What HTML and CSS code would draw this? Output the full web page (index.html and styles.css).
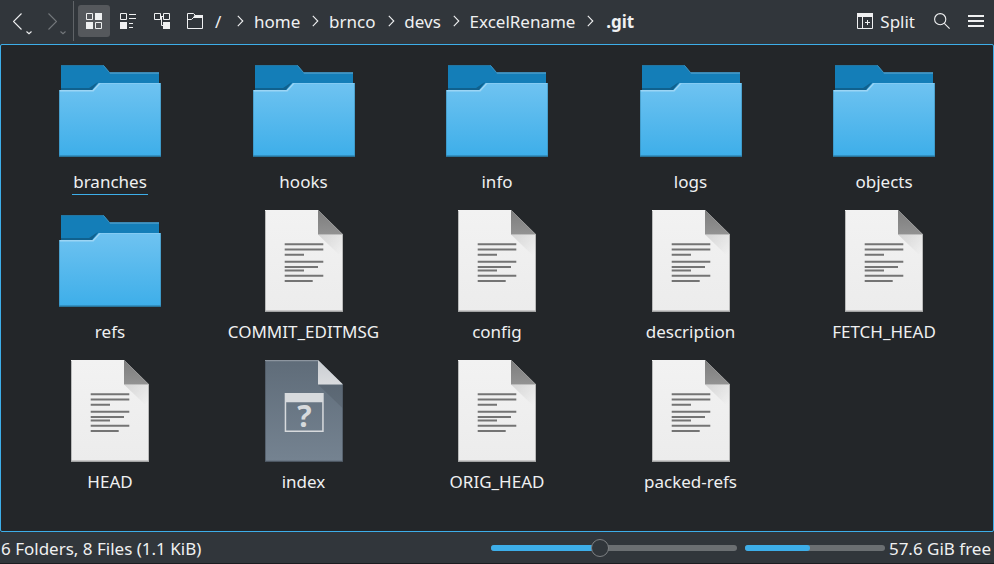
FILE: index.html
```html
<!DOCTYPE html>
<html lang="en">
<head>
<meta charset="utf-8">
<title>.git</title>
<link rel="stylesheet" href="styles.css">
</head>
<body>
<svg class="defs" width="0" height="0">
  <defs>
    <linearGradient id="front" x1="0" y1="0" x2="0" y2="1"><stop offset="0" stop-color="#6fc3f1"/><stop offset="1" stop-color="#3daee9"/></linearGradient>
    <linearGradient id="paper" x1="0" y1="0" x2="0" y2="1"><stop offset="0" stop-color="#f2f2f2"/><stop offset="1" stop-color="#ececec"/></linearGradient>
    <linearGradient id="fold" x1="0" y1="0" x2="0" y2="1"><stop offset="0" stop-color="#7d7d7d"/><stop offset="1" stop-color="#929292"/></linearGradient>
    <linearGradient id="shade" gradientUnits="userSpaceOnUse" x1="72" y1="25" x2="92" y2="45"><stop offset="0" stop-color="#000" stop-opacity=".11"/><stop offset="1" stop-color="#000" stop-opacity="0"/></linearGradient>
    <linearGradient id="slate" x1="0" y1="0" x2="0" y2="1"><stop offset="0" stop-color="#5f6c79"/><stop offset="1" stop-color="#758391"/></linearGradient>
    <linearGradient id="lightfold" x1="0" y1="0" x2="0" y2="1"><stop offset="0" stop-color="#c9cdd1"/><stop offset="1" stop-color="#dadcdf"/></linearGradient>
  </defs>
  <symbol id="folder" viewBox="0 0 112 102">
    <path fill="#147eb8" d="M7 5h42.500l6 7.500H105V30H7z"/>
    <path fill="#4a9dca" d="M55 12.200h50v1.500H56z"/>
    <path fill="#28749b" d="M7 5h42.500v.7H7z"/>
    <path fill="none" stroke="#3e93c1" d="M49.500 5.500l6 7"/>
    <path fill="#10618e" d="M7 28h28l9-6-6 8H7z"/>
    <path fill="url(#front)" d="M5 30h33.500l6.500-7h62v74H5z"/>
    <path fill="#9bd5f5" d="M5 30h33.500l6.500-7h2l-7.500 8.500H5z"/>
    <path fill="#8bcef3" d="M45 23h62v.7H45z"/>
    <path fill="#28749b" d="M5 95.500h102V97H5z"/>
    <path fill="#3585ad" opacity=".65" d="M5 30h.8v66H5zM106.200 23h.8v73h-.8z"/>
  </symbol>
  <symbol id="file" viewBox="0 0 112 102">
    <path fill="url(#paper)" d="M17 0h53l25 24.500V102H17z"/>
    <path fill="url(#shade)" d="M70 24.500h25V48.500z"/>
    <path fill="url(#fold)" d="M70 0l25 24.500H70z"/>
    <path fill="#a3a4a4" d="M17 100.600h78V102H17zM17 1h.7v100H17zM94.300 24.500h.7V101h-.7z"/>
    <path fill="#747474" d="M36.700 33.200h38.600v2H36.700zm0 5.400h38.600v2H36.700zm0 5.200H56v2H36.700zm0 7h38.600v2H36.700zm0 5.300H70v2H36.700zm0 3.500H56v2H36.700zm0 5.200h38.600v2H36.700zm0 5.300h28v2h-28z"/>
  </symbol>
  <symbol id="chevron" viewBox="0 0 7 12"><path class="line" d="M.8.8L5.800 6 .8 11.200"/></symbol>
  <symbol id="caret" viewBox="0 0 6 4"><path class="line" d="M.5.500L3 2.700 5.500.500"/></symbol>
</svg>

<div class="window">
  <header class="toolbar">
    <div class="nav back"><svg width="9" height="17" viewBox="0 0 9 17"><path class="line" d="M8.500.500l-8 8 8 8"/></svg><svg class="caret" width="6" height="4"><use href="#caret"/></svg></div>
    <div class="nav forward"><svg width="9" height="17" viewBox="0 0 9 17"><path class="line" d="M.5.500l8 8-8 8"/></svg><svg class="caret" width="6" height="4"><use href="#caret"/></svg></div>
    <div class="divider"></div>
    <div class="tool active"><svg width="16" height="16" viewBox="0 0 16 16"><path class="box" d="M.5.500h6v6h-6zM9.500 9.500h6v6h-6z"/><path class="solid" d="M9 0h7v7H9zM0 9h7v7H0z"/></svg></div>
    <div class="tool"><svg width="16" height="16" viewBox="0 0 16 16"><path class="box" d="M.5.500h6v6h-6z"/><path class="solid" d="M0 9h7v7H0zM9 1h7v1H9zM9 5h7v1H9zM9 10h4v1H9zM9 14h4v1H9z"/></svg></div>
    <div class="tool"><svg width="16" height="16" viewBox="0 0 16 16"><path class="box" d="M.5.500h6v6h-6zM9.500.500h6v6h-6zM7 3.500h2.500M7.500 3.500v9H9"/><path class="solid" d="M9 9h7v7H9z"/></svg></div>
    <div class="tool place"><svg width="16" height="16" viewBox="0 0 16 16"><path class="box" d="M.5.500h6l2 2h7v13H.5z"/><path class="box" d="M.5 6.500h4l3-3h8"/><path class="solid" d="M7.500 2H16v3H6z"/></svg></div>
    <nav class="crumbs">
      <span class="root">/</span><svg width="7" height="12"><use href="#chevron"/></svg>
      <span>home</span><svg width="7" height="12"><use href="#chevron"/></svg>
      <span>brnco</span><svg width="7" height="12"><use href="#chevron"/></svg>
      <span>devs</span><svg width="7" height="12"><use href="#chevron"/></svg>
      <span>ExcelRename</span><svg width="7" height="12"><use href="#chevron"/></svg>
      <b>.git</b>
    </nav>
    <div class="actions">
      <svg width="16" height="16" viewBox="0 0 16 16"><path class="box" d="M.5.500h15v15H.5zM5.500 3v12M10.500 7v5M8 9.500h5"/><path class="solid" d="M0 0h16v4H0z"/></svg>
      <span>Split</span>
      <svg class="search" width="16" height="16" viewBox="0 0 16 16"><circle class="line" cx="6.200" cy="6.200" r="5.600"/><path class="line" d="M10.300 10.300l5.300 5.300"/></svg>
      <svg class="menu" width="16" height="12" viewBox="0 0 16 12"><path class="solid" d="M0 0h16v2H0zM0 5h16v2H0zM0 10h16v2H0z"/></svg>
    </div>
  </header>

  <main class="view">
    <div class="item current"><svg width="112" height="102"><use href="#folder"/></svg><span>branches</span></div>
    <div class="item"><svg width="112" height="102"><use href="#folder"/></svg><span>hooks</span></div>
    <div class="item"><svg width="112" height="102"><use href="#folder"/></svg><span>info</span></div>
    <div class="item"><svg width="112" height="102"><use href="#folder"/></svg><span>logs</span></div>
    <div class="item"><svg width="112" height="102"><use href="#folder"/></svg><span>objects</span></div>
    <div class="item"><svg width="112" height="102"><use href="#folder"/></svg><span>refs</span></div>
    <div class="item"><svg width="112" height="102"><use href="#file"/></svg><span>COMMIT_EDITMSG</span></div>
    <div class="item"><svg width="112" height="102"><use href="#file"/></svg><span>config</span></div>
    <div class="item"><svg width="112" height="102"><use href="#file"/></svg><span>description</span></div>
    <div class="item"><svg width="112" height="102"><use href="#file"/></svg><span>FETCH_HEAD</span></div>
    <div class="item"><svg width="112" height="102"><use href="#file"/></svg><span>HEAD</span></div>
    <div class="item">
      <svg width="112" height="102" viewBox="0 0 112 102">
        <path fill="url(#slate)" d="M17 0h53l25 24.500V102H17z"/>
        <path fill="#8c959f" d="M17 0h53v1.300H17z"/>
        <path fill="#2b333b" opacity=".16" d="M70 24.500h25V48.500z"/>
        <path fill="url(#lightfold)" d="M70 0l25 24.500H70z"/>
        <path fill="#4c5661" d="M17 100.700h78V102H17zM17 1h.7v100H17zM94.300 24.500h.7V101h-.7z"/>
        <path fill="#d7dadd" fill-rule="evenodd" d="M36.700 33h39v39h-39zM38.200 42.300v28.200h36V42.300z"/>
        <text x="56.500" y="67" text-anchor="middle" class="mark">?</text>
      </svg>
      <span>index</span>
    </div>
    <div class="item"><svg width="112" height="102"><use href="#file"/></svg><span>ORIG_HEAD</span></div>
    <div class="item"><svg width="112" height="102"><use href="#file"/></svg><span>packed-refs</span></div>
  </main>

  <footer class="status">
    <span class="summary">6 Folders, 8 Files (1.1 KiB)</span>
    <div class="track zoom"><div class="fill"></div><div class="thumb"></div></div>
    <div class="track space"><div class="fill"></div></div>
    <span class="free">57.6 GiB free</span>
  </footer>
</div>
</body>
</html>
```
FILE: styles.css
```css
* { box-sizing: border-box; }
body {
  margin: 0;
  background: #31363b;
  color: #eff0f1;
  font: 17px/24px "Noto Sans", sans-serif;
}
svg { display: block; flex: none; }
.defs { position: absolute; }
.line { fill: none; stroke: currentColor; stroke-width: 1.1; }
.box { fill: none; stroke: currentColor; stroke-width: 1; }
.solid { fill: currentColor; }
.mark { font: 700 30px "Noto Sans", sans-serif; fill: #d7dadd; }

.window { width: 994px; height: 564px; display: flex; flex-direction: column; overflow: hidden; }

.toolbar { height: 44px; display: flex; align-items: center; padding-bottom: 2px; flex: none; }
.nav { display: flex; align-items: center; width: 34px; height: 42px; padding-left: 13px; gap: 4px; }
.nav .caret { margin-top: 23px; }
.forward { color: #74787c; padding-left: 14px; gap: 3px; }
.divider { width: 1px; height: 40px; background: #5f6367; margin: 0 4px 0 5px; }
.tool { width: 32px; height: 32px; margin-right: 2px; display: flex; align-items: center; justify-content: center; border-radius: 3px; }
.active { background: #55585c; }
.place { margin-left: -1px; }
.crumbs { display: flex; align-items: center; margin-left: 2px; white-space: nowrap; }
.crumbs span, .crumbs b, .actions span { padding-top: 2px; }
.crumbs span { margin-right: 12px; }
.crumbs .root { margin-right: 16px; }
.crumbs svg { margin-right: 9.75px; }
.crumbs b { margin-left: 2px; }
.actions { display: flex; align-items: center; margin-left: auto; padding-right: 10px; }
.actions span { margin-left: 7px; }
.search { margin-left: 19px; }
.menu { margin-left: 18px; }

.view {
  height: 488px;
  flex: none;
  display: grid;
  grid-template-columns: repeat(5, 193.5px);
  grid-auto-rows: 150px;
  padding: 15px 0 0 12.25px;
  align-content: start;
  background: #232629;
  border: 1px solid #3daee9;
  border-radius: 2px;
}
.item { display: flex; flex-direction: column; align-items: center; }
.item span { margin-top: 8px; height: 25px; }
.current span { border-bottom: 1px solid #3daee9; padding: 0 1px; }

.status { height: 32px; display: flex; align-items: center; padding: 1px 3px 0 1px; border-bottom: 1px solid #1b1c20; white-space: nowrap; }
.summary, .free { padding-top: 2px; }
.summary { width: 490px; }
.track { height: 6px; border-radius: 3px; background: #6b6f72; display: flex; align-items: center; margin-top: -1px; flex: none; }
.fill { height: 6px; border-radius: 3px; background: #3daee9; flex: none; }
.zoom { width: 246px; }
.zoom .fill { width: 108px; }
.thumb { width: 18px; height: 18px; border-radius: 50%; background: #31363b; border: 1px solid #7d8083; margin-left: -8px; flex: none; }
.space { width: 140px; margin-left: 8px; }
.space .fill { width: 65px; }
.free { margin-left: 4px; }
```
